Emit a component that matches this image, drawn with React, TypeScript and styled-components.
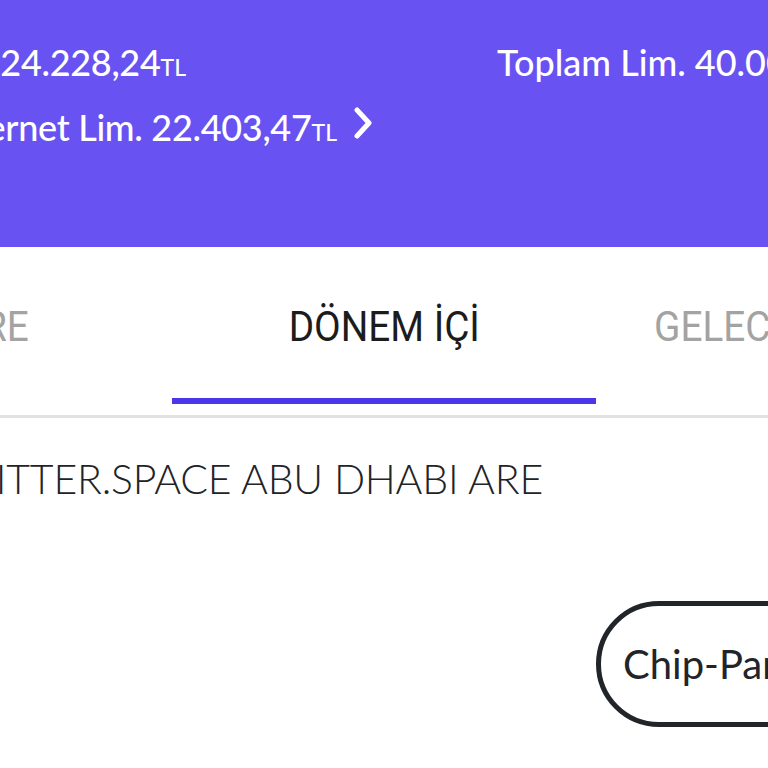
import styled, { createGlobalStyle } from "styled-components";

const GlobalStyle = createGlobalStyle`
  html, body {
    margin: 0;
    padding: 0;
    background: #ffffff;
    overflow: hidden;
  }
  * {
    box-sizing: border-box;
  }
`;

const Screen = styled.div`
  width: 768px;
  height: 768px;
  overflow: hidden;
  display: flex;
  flex-direction: column;
  font-family: Lato, "Open Sans", sans-serif;
`;

const Header = styled.div`
  height: 247px;
  flex-shrink: 0;
  background: #6852f1;
  color: #ffffff;
  padding-top: 40px;
  display: flex;
  flex-direction: column;
  gap: 21px;
`;

const HeaderRow = styled.div`
  display: flex;
  align-items: baseline;
  white-space: nowrap;
`;

// right-aligned block whose right edge sits at $end px
const Lead = styled.div<{ $end: number }>`
  width: 900px;
  margin-left: ${(p) => p.$end - 900}px;
  flex-shrink: 0;
  display: flex;
  justify-content: flex-end;
  align-items: center;
  gap: 15px;
`;

const Amount = styled.span`
  font-size: 36px;
  font-weight: 500;
  letter-spacing: -0.3px;
`;

const Currency = styled.span`
  font-size: 23px;
  font-weight: 500;
`;

const TotalLimit = styled.span`
  margin-left: 311px;
  font-size: 36px;
  font-weight: 500;
`;

const Chevron = styled.svg`
  width: 22px;
  height: 32px;
  flex-shrink: 0;
  margin-bottom: 8px;
`;

const Tabs = styled.div`
  height: 171px;
  flex-shrink: 0;
  display: flex;
  margin-left: -252px;
  border-bottom: 3px solid #e2e2e2;
`;

const Tab = styled.div`
  width: 424px;
  flex-shrink: 0;
  display: flex;
  flex-direction: column;
  align-items: center;
  justify-content: flex-end;
  padding-bottom: 11px;
`;

const TabLabel = styled.span<{ $active?: boolean }>`
  font-family: Roboto, "Liberation Sans", sans-serif;
  font-size: 43px;
  white-space: nowrap;
  color: ${(p) => (p.$active ? "#1c1c1c" : "#a3a3a3")};
  transform: scaleX(0.9);
  line-height: 1;
  margin-bottom: 50px;
`;

const Indicator = styled.div<{ $active?: boolean }>`
  width: 100%;
  height: 6px;
  background: ${(p) => (p.$active ? "#4b36e9" : "transparent")};
`;

const Merchant = styled.div`
  width: 1000px;
  margin: 36px 0 0 -457px;
  text-align: right;
  font-size: 41px;
  font-weight: 300;
  color: #222326;
  white-space: nowrap;
  letter-spacing: -0.2px;
`;

const ChipRow = styled.div`
  margin-top: 98px;
  padding-left: 596px;
  display: flex;
`;

const Chip = styled.div`
  height: 126px;
  border: 5px solid #212429;
  border-radius: 64px;
  padding: 0 40px 0 22px;
  display: flex;
  align-items: center;
  font-size: 40px;
  color: #212429;
  white-space: nowrap;
`;

export default function App() {
  return (
    <>
      <GlobalStyle />
      <Screen>
        <Header>
          <HeaderRow>
            <Lead $end={186}>
              <span>
                <Amount>Kalan Borç 24.228,24</Amount>
                <Currency>TL</Currency>
              </span>
            </Lead>
            <TotalLimit>Toplam Lim. 40.000,00TL</TotalLimit>
          </HeaderRow>
          <HeaderRow>
            <Lead $end={374}>
              <span>
                <Amount>Kullanılabilir İnternet Lim. 22.403,47</Amount>
                <Currency>TL</Currency>
              </span>
              <Chevron viewBox="0 0 22 32">
                <path
                  d="M5 3 L17 16 L5 29"
                  fill="none"
                  stroke="#ffffff"
                  strokeWidth="5"
                  strokeLinecap="round"
                  strokeLinejoin="round"
                />
              </Chevron>
            </Lead>
          </HeaderRow>
        </Header>
        <Tabs>
          <Tab>
            <TabLabel>EKSTRE</TabLabel>
            <Indicator />
          </Tab>
          <Tab>
            <TabLabel $active>DÖNEM İÇİ</TabLabel>
            <Indicator $active />
          </Tab>
          <Tab>
            <TabLabel>GELECEK DÖNEM</TabLabel>
            <Indicator />
          </Tab>
        </Tabs>
        <Merchant>WWW.TWITTER.SPACE ABU DHABI ARE</Merchant>
        <ChipRow>
          <Chip>Chip-Para</Chip>
        </ChipRow>
      </Screen>
    </>
  );
}
